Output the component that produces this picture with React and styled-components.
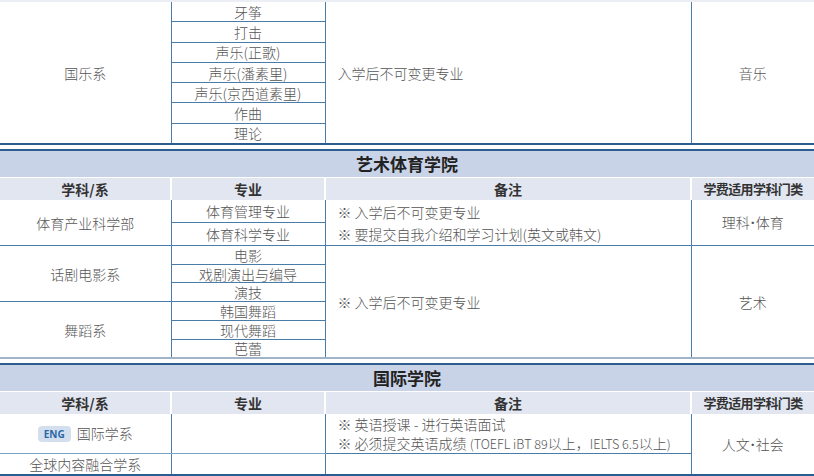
import React from 'react';
import styled, { createGlobalStyle } from 'styled-components';

const LINE = '#4a7caa';
const DARK = '#2b5e8e';
const SOFT = '#9fb3c9';

const Global = createGlobalStyle`
  html, body { margin: 0; padding: 0; background: #fff; }
  body { font-family: "Noto Sans CJK SC", "Noto Sans", sans-serif; overflow: hidden; }
`;

const Page = styled.div`
  width: 814px;
  display: flex;
  flex-direction: column;
  gap: 4px;
`;

const Table = styled.table`
  width: 814px;
  table-layout: fixed;
  border-collapse: collapse;
  border-top: 2px solid ${(p) => p.$top || DARK};
  border-bottom: 2px solid ${(p) => p.$bottom || DARK};
`;

const Col = styled.col`
  width: ${(p) => p.$w}px;
`;

const Band = styled.th`
  height: 26px;
  padding: 0;
  background: #c9d3e7;
  color: #222;
  font-size: 17px;
  line-height: 22px;
  font-weight: 700;
  text-align: center;
  border-bottom: 1px solid #fff;
`;

const Head = styled.th`
  height: 22px;
  padding: 0;
  background: #e2e6f1;
  color: #333;
  font-size: ${(p) => (p.$small ? '13px' : '14px')};
  line-height: 18px;
  font-weight: 700;
  text-align: center;
  letter-spacing: ${(p) => (p.$small ? '-0.6px' : '0')};
  border-left: ${(p) => (p.$first ? 'none' : '2px solid #fff')};
  white-space: nowrap;
`;

const Td = styled.td`
  height: ${(p) => p.$h || 19}px;
  padding: 0 0 0 ${(p) => (p.$left ? '12px' : '0')};
  text-align: ${(p) => (p.$left ? 'left' : 'center')};
  vertical-align: middle;
  font-size: 14px;
  font-weight: 300;
  line-height: ${(p) => p.$lh || 16}px;
  color: #555;
  white-space: nowrap;
  border-left: ${(p) => (p.$first ? 'none' : `1px solid ${LINE}`)};
  border-right: ${(p) => (p.$last ? 'none' : `1px solid ${LINE}`)};
  border-bottom: 1px solid ${(p) => (p.$soft ? '#7fa3c6' : LINE)};
`;

const Line = styled.div`
  line-height: ${(p) => p.$lh}px;
`;

const Latin = styled.span`
  font-size: 12.6px;
`;

const Dot = styled.span`
  font-family: "Noto Sans", sans-serif;
  font-weight: 700;
  margin: 0 1px;
`;

const Badge = styled.span`
  display: inline-block;
  margin-right: 6px;
  padding: 0 6px;
  border-radius: 4px;
  background: #d3dfee;
  color: #2a68a6;
  font-family: "Noto Sans", sans-serif;
  font-size: 10px;
  font-weight: 700;
  line-height: 16px;
  vertical-align: 1px;
`;

const Cols = () => (
  <colgroup>
    <Col $w={171} />
    <Col $w={154} />
    <Col $w={366} />
    <Col $w={123} />
  </colgroup>
);

const HeadRow = () => (
  <tr>
    <Head $first>学科/系</Head>
    <Head>专业</Head>
    <Head>备注</Head>
    <Head $small>学费适用学科门类</Head>
  </tr>
);

const musicMajors = ['牙筝', '打击', '声乐(正歌)', '声乐(潘素里)', '声乐(京西道素里)', '作曲', '理论'];
const dramaMajors = ['电影', '戏剧演出与编导', '演技'];
const danceMajors = ['韩国舞蹈', '现代舞蹈', '芭蕾'];

export default function App() {
  return (
    <Page>
      <Global />
      <Table $top="#eceef5" $bottom={DARK}>
        <Cols />
        <tbody>
          {musicMajors.map((m, i) => (
            <tr key={m}>
              {i === 0 && (
                <Td $first rowSpan={7}>国乐系</Td>
              )}
              <Td $h={19.3}>{m}</Td>
              {i === 0 && (
                <Td $left rowSpan={7}>入学后不可变更专业</Td>
              )}
              {i === 0 && (
                <Td $last rowSpan={7}>音乐</Td>
              )}
            </tr>
          ))}
        </tbody>
      </Table>

      <Table $bottom={SOFT}>
        <Cols />
        <thead>
          <tr>
            <Band colSpan={4}>艺术体育学院</Band>
          </tr>
          <HeadRow />
        </thead>
        <tbody>
          <tr>
            <Td $first rowSpan={2}>体育产业科学部</Td>
            <Td $h={22}>体育管理专业</Td>
            <Td $left rowSpan={2}>
              <Line $lh={22}>※ 入学后不可变更专业</Line>
              <Line $lh={22}>※ 要提交自我介绍和学习计划(英文或韩文)</Line>
            </Td>
            <Td $last rowSpan={2}>
              理科<Dot>·</Dot>体育
            </Td>
          </tr>
          <tr>
            <Td $h={22}>体育科学专业</Td>
          </tr>
          {dramaMajors.map((m, i) => (
            <tr key={m}>
              {i === 0 && (
                <Td $first rowSpan={3}>话剧电影系</Td>
              )}
              <Td $h={17.7}>{m}</Td>
              {i === 0 && (
                <Td $left rowSpan={6}>※ 入学后不可变更专业</Td>
              )}
              {i === 0 && (
                <Td $last rowSpan={6}>艺术</Td>
              )}
            </tr>
          ))}
          {danceMajors.map((m, i) => (
            <tr key={m}>
              {i === 0 && (
                <Td $first rowSpan={3}>舞蹈系</Td>
              )}
              <Td $h={17.7}>{m}</Td>
            </tr>
          ))}
        </tbody>
      </Table>

      <Table $bottom={DARK}>
        <Cols />
        <thead>
          <tr>
            <Band colSpan={4}>国际学院</Band>
          </tr>
          <HeadRow />
        </thead>
        <tbody>
          <tr>
            <Td $first $soft $h={39}>
              <Badge>ENG</Badge>国际学系
            </Td>
            <Td $soft $h={39} />
            <Td $left $h={39}>
              <Line $lh={19}>※ 英语授课 - 进行英语面试</Line>
              <Line $lh={19}>
                ※ 必须提交英语成绩 <Latin>(TOEFL iBT 89</Latin>以上，<Latin>IELTS 6.5</Latin>以上<Latin>)</Latin>
              </Line>
            </Td>
            <Td $last rowSpan={2}>
              人文<Dot>·</Dot>社会
            </Td>
          </tr>
          <tr>
            <Td $first $h={20}>全球内容融合学系</Td>
            <Td $h={20} />
            <Td $h={20} />
          </tr>
        </tbody>
      </Table>
    </Page>
  );
}
